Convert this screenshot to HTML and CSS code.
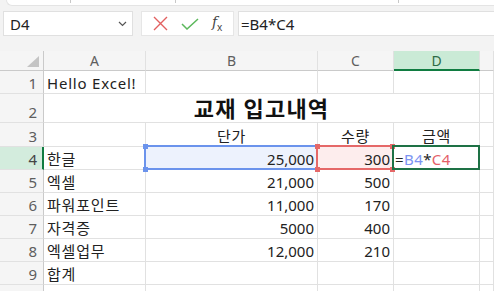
FILE: index.html
```html
<!DOCTYPE html>
<html lang="ko">
<head>
    <meta charset="utf-8">
    <title>교재 입고내역</title>
    <link rel="stylesheet" href="styles.css">
</head>
<body>
    <div class="ribbon-end">
        <span class="sep s1"></span>
        <span class="sep s2"></span>
        <span class="sep s3"></span>
    </div>

    <div class="formula-row">
        <div class="name-box">
            <span>D4</span>
            <svg class="chev" width="9" height="6" viewBox="0 0 9 6"><polyline points="1,1 4.5,4.5 8,1" fill="none" stroke="#555" stroke-width="1.2"/></svg>
        </div>
        <div class="fx-buttons">
            <svg width="15" height="15" viewBox="0 0 15 15"><path d="M1 1 L14 14 M14 1 L1 14" stroke="#e26060" stroke-width="1.4" fill="none"/></svg>
            <svg width="18" height="12" viewBox="0 0 18 12"><polyline points="1,6 6,11 17,1" fill="none" stroke="#5cb85c" stroke-width="1.5"/></svg>
            <span class="fx"><i>f</i><sub>x</sub></span>
        </div>
        <div class="formula-input">=B4*C4</div>
    </div>

    <div class="sheet">
        <!-- header -->
        <div class="hd corner">
            <svg width="12" height="11" viewBox="0 0 12 11"><polygon points="12,0 12,11 0,11" fill="#c4c4c4"/></svg>
        </div>
        <div class="hd col">A</div>
        <div class="hd col">B</div>
        <div class="hd col">C</div>
        <div class="hd col active">D</div>
        <div class="hd col"></div>

        <!-- 1 -->
        <div class="hd row">1</div>
        <div class="cell txt">Hello Excel!</div>
        <div class="cell"></div><div class="cell"></div><div class="cell"></div><div class="cell"></div>

        <!-- 2 -->
        <div class="hd row">2</div>
        <div class="cell title">교재 입고내역</div>
        <div class="cell"></div>

        <!-- 3 -->
        <div class="hd row">3</div>
        <div class="cell"></div>
        <div class="cell txt mid">단가</div>
        <div class="cell txt mid">수량</div>
        <div class="cell txt mid">금액</div>
        <div class="cell"></div>

        <!-- 4 -->
        <div class="hd row active">4</div>
        <div class="cell txt">한글</div>
        <div class="cell num ref-b">25,000<span class="dot tl"></span><span class="dot bl"></span></div>
        <div class="cell num ref-c">300<span class="dot tl"></span><span class="dot bl"></span><span class="dot tr"></span><span class="dot br"></span></div>
        <div class="cell editing">=<span class="b">B4</span>*<span class="c">C4</span></div>
        <div class="cell"></div>

        <!-- 5 -->
        <div class="hd row">5</div>
        <div class="cell txt">엑셀</div>
        <div class="cell num">21,000</div>
        <div class="cell num">500</div>
        <div class="cell"></div><div class="cell"></div>

        <!-- 6 -->
        <div class="hd row">6</div>
        <div class="cell txt">파워포인트</div>
        <div class="cell num">11,000</div>
        <div class="cell num">170</div>
        <div class="cell"></div><div class="cell"></div>

        <!-- 7 -->
        <div class="hd row">7</div>
        <div class="cell txt">자격증</div>
        <div class="cell num">5000</div>
        <div class="cell num">400</div>
        <div class="cell"></div><div class="cell"></div>

        <!-- 8 -->
        <div class="hd row">8</div>
        <div class="cell txt">엑셀업무</div>
        <div class="cell num">12,000</div>
        <div class="cell num">210</div>
        <div class="cell"></div><div class="cell"></div>

        <!-- 9 -->
        <div class="hd row">9</div>
        <div class="cell txt">합계</div>
        <div class="cell"></div><div class="cell"></div><div class="cell"></div><div class="cell"></div>

        <!-- 10, only its top edge is visible -->
        <div class="hd row"></div>
        <div class="cell"></div><div class="cell"></div><div class="cell"></div><div class="cell"></div><div class="cell"></div>
    </div>
</body>
</html>
```

FILE: styles.css
```css
body {
    margin: 0;
    background-color: #f3f3f3;
    font-family: "Noto Sans", "Noto Sans CJK KR", sans-serif;
    font-size: 15px;
    color: #222;
    overflow: hidden;
}

/* bottom of the ribbon */
.ribbon-end {
    position: relative;
    height: 5px;
    margin-left: 6px;
    background-color: #fff;
    border-bottom: 1px solid #e4e4e4;
    border-left: 1px solid #e4e4e4;
    border-bottom-left-radius: 8px;
}

.sep {
    position: absolute;
    top: 0;
    width: 1px;
    height: 3px;
    background-color: #c8c8c8;
}
.s1 { left: 63px; }
.s2 { left: 168px; }
.s3 { left: 391px; }

/* name box + formula bar */
.formula-row {
    display: flex;
    height: 25px;
    margin-top: 5px;
    padding-left: 3px;
}

.name-box {
    box-sizing: border-box;
    width: 130px;
    display: flex;
    align-items: center;
    justify-content: space-between;
    padding: 0 5px 0 6px;
    background-color: #fff;
    border: 1px solid #e0e0e0;
}

.fx-buttons {
    box-sizing: border-box;
    width: 93px;
    margin-left: 8px;
    display: flex;
    align-items: center;
    justify-content: space-around;
    padding: 0 4px;
    background-color: #fff;
    border: 1px solid #e6e6e6;
}

.fx {
    font-family: "DejaVu Serif", serif;
    font-size: 14px;
    color: #444;
}
.fx sub {
    font-family: "Noto Sans", sans-serif;
    font-size: 10px;
}

.formula-input {
    flex: 1;
    margin-left: 4px;
    margin-right: -6px;
    padding-left: 2px;
    display: flex;
    align-items: center;
    background-color: #fff;
    border: 1px solid #e0e0e0;
}

/* grid */
.sheet {
    margin-top: 15px;
    display: grid;
    grid-template-columns: 44px 102px 172px 76px 86px 1fr;
    grid-template-rows: 20px 23px 29px 24px repeat(7, 23px);
    background-color: #fff;
}

.sheet > div {
    box-sizing: border-box;
    border-right: 1px solid #e1e1e1;
    border-bottom: 1px solid #e1e1e1;
}

.hd {
    background-color: #f5f5f5;
    color: #5e5e5e;
    display: flex;
}

.hd.col {
    font-size: 14px;
    align-items: center;
    justify-content: center;
    border-bottom-color: #cacaca;
}

.hd.col.active {
    background-color: #caead6;
    color: #2d6a45;
    border-bottom: 2px solid #107c41;
}

.hd.corner {
    align-items: flex-end;
    justify-content: flex-end;
    padding: 0 4px 3px 0;
    border-bottom-color: #cacaca;
    border-right-color: #cacaca;
}

.hd.row {
    align-items: flex-end;
    justify-content: flex-end;
    padding-right: 6px;
    line-height: 20px;
    border-right-color: #cacaca;
}

.hd.row.active {
    background-color: #d3ecdd;
    color: #444;
    border-right: 2px solid #107c41;
    padding-right: 5px;
}

.cell {
    display: flex;
    align-items: flex-end;
    padding: 0 3px;
    line-height: 20px;
    white-space: nowrap;
    position: relative;
}

.cell.txt {
    letter-spacing: 0.8px;
}

.cell.title {
    grid-column: 2 / 6;
    justify-content: center;
    font-size: 22px;
    font-weight: bold;
    line-height: 28px;
    letter-spacing: 1.2px;
    color: #111;
}

.cell.mid {
    justify-content: center;
}

.cell.num {
    justify-content: flex-end;
}

/* formula references */
.ref-b {
    background-color: #edf2fd;
}
.ref-b::after {
    content: "";
    position: absolute;
    left: -2px;
    top: -2px;
    right: -1px;
    bottom: -1px;
    border: 2px solid #6b93ec;
}

.ref-c {
    background-color: #fdeded;
}
.ref-c::after {
    content: "";
    position: absolute;
    left: -2px;
    top: -2px;
    right: -1px;
    bottom: -1px;
    border: 2px solid #e56868;
}

.dot {
    position: absolute;
    width: 5px;
    height: 5px;
    z-index: 2;
}
.ref-b .dot { background-color: #6b93ec; }
.ref-c .dot { background-color: #e56868; }
.dot.tl { left: -3px; top: -3px; }
.dot.bl { left: -3px; bottom: -3px; }
.dot.tr { right: -2px; top: -3px; }
.dot.br { right: -2px; bottom: -3px; }

.editing {
    padding-left: 1px;
    letter-spacing: 0.4px;
    z-index: 3;
}
.editing::after {
    content: "";
    position: absolute;
    left: -2px;
    top: -2px;
    right: -1px;
    bottom: -1px;
    border: 2px solid #1e7145;
}
.editing .b { color: #7b93f2; }
.editing .c { color: #e45f68; }
```
